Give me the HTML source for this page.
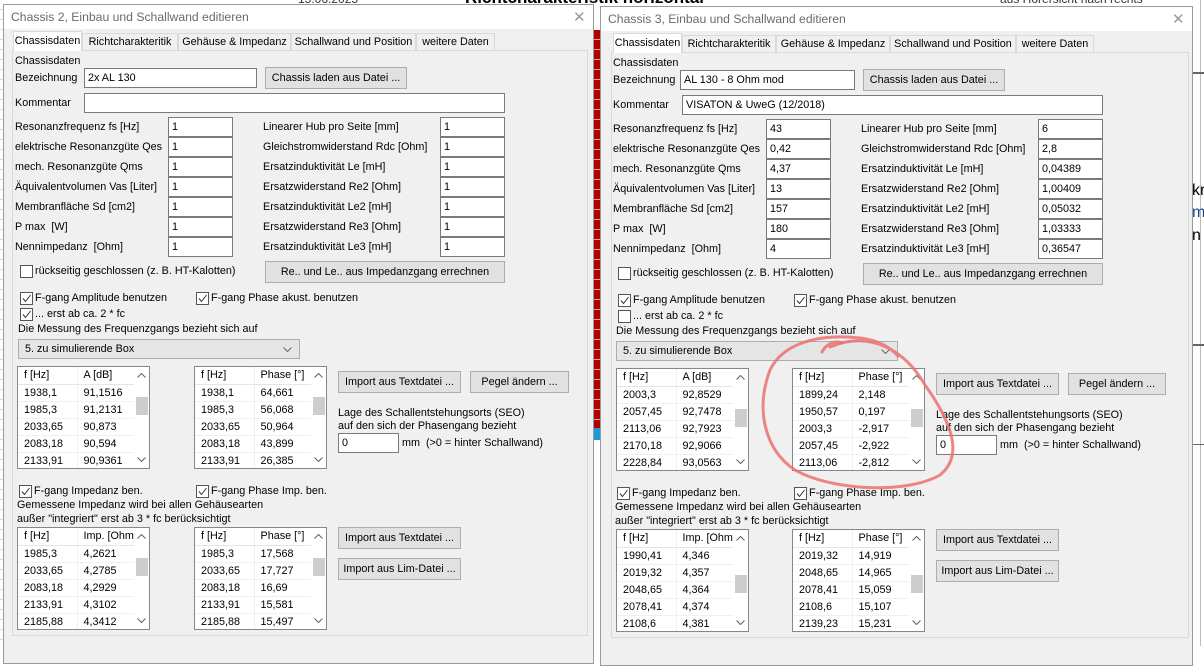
<!DOCTYPE html>
<html><head><meta charset="utf-8"><style>
*{box-sizing:border-box;margin:0;padding:0}
body{width:1204px;height:646px;overflow:hidden;background:#fff;font-family:"Liberation Sans",Arial,sans-serif;font-size:10.8px;color:#000;position:relative}
.a{position:absolute}
.frame{position:absolute;background:#f0f0f0;border:1px solid #9a9a9a;overflow:hidden}
.tbar{position:absolute;left:0;top:0;right:0;height:24px;background:#fff}
.ttl{position:absolute;left:7px;top:5px;font-size:12.2px;color:#6a6a6a}
.cls{position:absolute;top:3px;font-size:15px;color:#999;font-weight:normal}
.grp{position:absolute}
.t{position:absolute;white-space:nowrap;line-height:14px}
.in{position:absolute;background:#fff;border:1px solid #7a7a7a;height:20px;padding-left:3px;line-height:18px;white-space:nowrap}
.btn{position:absolute;background:#e1e1e1;border:1px solid #adadad;height:22px;line-height:20px;text-align:center;white-space:nowrap}
.cb{position:absolute;width:13px;height:13px;background:#fff;border:1px solid #555}
.cb svg{position:absolute;left:0;top:0}
.tab{position:absolute;top:33px;height:17px;border:1px solid #d9d9d9;border-bottom:none;background:#f0f0f0;text-align:center;line-height:16px;white-space:nowrap}
.tab.sel{top:31px;height:20px;background:#fff;line-height:18px;z-index:2}
.panel{position:absolute;left:12px;top:50px;width:576px;height:586px;border:1px solid #d9d9d9;background:#f0f0f0}
.sel2{position:absolute;background:#e5e5e5;border:1px solid #adadad;height:20px;line-height:18px;padding-left:6px}
.tb{position:absolute;width:133px;height:103px;background:#fff;border:1px solid #828790;overflow:hidden}
.tb table{border-collapse:collapse;table-layout:fixed;position:absolute;left:0;top:0}
.tb td{height:17px;border-bottom:1px solid #f0f0f0;border-right:1px solid #f0f0f0;padding-left:6px;white-space:nowrap;overflow:hidden;line-height:16px}
.tb tr:first-child td{border-bottom:1px solid #e5e5e5}
.sb{position:absolute;left:116px;top:0;width:16px;height:101px;background:#fff}
.sb .th{position:absolute;left:2px;top:30px;width:12px;height:18px;background:#cdcdcd}
.sb svg{position:absolute;left:3px}
</style></head><body>

<div class="a" style="left:0;top:0;width:8px;height:646px;background:repeating-linear-gradient(#fff 0 9px,#ddd 9px 10px)"></div>
<div class="t" style="left:298px;top:-8px;font-size:12px;color:#333">15.06.2025</div>
<div class="t" style="left:465px;top:-9px;font-size:17px;font-weight:bold">Richtcharakteristik horizontal</div>
<div class="t" style="left:1000px;top:-8px;font-size:12px;color:#333">aus Hörersicht nach rechts</div>
<div class="a" style="left:593px;top:30px;width:7px;height:398px;background:repeating-linear-gradient(#b00000 0 9px,#e6b0a0 9px 10px)"></div>
<div class="a" style="left:593px;top:428px;width:7px;height:12px;background:#1e9ad6"></div>
<div class="a" style="left:1200px;top:0;width:1px;height:646px;background:#bbb"></div>
<div class="a" style="left:1192px;top:72px;width:12px;height:2px;background:#666"></div>
<div class="a" style="left:1192px;top:344px;width:12px;height:2px;background:#666"></div>
<div class="a" style="left:1192px;top:444px;width:12px;height:1px;background:#666"></div>
<div class="t" style="left:1192px;top:184px;font-size:16px">kr</div>
<div class="t" style="left:1192px;top:206px;font-size:16px;color:#1a4a8a">m</div>
<div class="t" style="left:1192px;top:229px;font-size:16px">n</div>

<!-- LEFT DIALOG -->
<div class="frame" style="left:3px;top:4px;width:591px;height:660px">
 <div class="tbar"></div>
 <div class="ttl">Chassis 2, Einbau und Schallwand editieren</div>
 <div class="cls" style="left:569px">✕</div>
</div>
<div class="grp" style="left:0;top:0">
 <div class="panel"></div>
 <div class="tab sel" style="left:13px;width:69px">Chassisdaten</div>
 <div class="tab" style="left:82px;width:96px">Richtcharakteritik</div>
 <div class="tab" style="left:178px;width:113px">Gehäuse &amp; Impedanz</div>
 <div class="tab" style="left:291px;width:125px">Schallwand und Position</div>
 <div class="tab" style="left:416px;width:79px">weitere Daten</div>
 <div class="t" style="left:15px;top:54px">Chassisdaten</div>
 <div class="t" style="left:15px;top:71px">Bezeichnung</div>
 <div class="in" style="left:84px;top:68px;width:173px">2x AL 130</div>
 <div class="btn" style="left:265px;top:67px;width:142px">Chassis laden aus Datei ...</div>
 <div class="t" style="left:15px;top:96px">Kommentar</div>
 <div class="in" style="left:84px;top:93px;width:421px"></div>

 <div class="t" style="left:15px;top:120px">Resonanzfrequenz fs [Hz]</div>
 <div class="t" style="left:15px;top:140px">elektrische Resonanzgüte Qes</div>
 <div class="t" style="left:15px;top:160px">mech. Resonanzgüte Qms</div>
 <div class="t" style="left:15px;top:180px">Äquivalentvolumen Vas [Liter]</div>
 <div class="t" style="left:15px;top:200px">Membranfläche Sd [cm2]</div>
 <div class="t" style="left:15px;top:220px">P max&nbsp; [W]</div>
 <div class="t" style="left:15px;top:240px">Nennimpedanz&nbsp; [Ohm]</div>
 <div class="in" style="left:168px;top:117px;width:65px">1</div>
 <div class="in" style="left:168px;top:137px;width:65px">1</div>
 <div class="in" style="left:168px;top:157px;width:65px">1</div>
 <div class="in" style="left:168px;top:177px;width:65px">1</div>
 <div class="in" style="left:168px;top:197px;width:65px">1</div>
 <div class="in" style="left:168px;top:217px;width:65px">1</div>
 <div class="in" style="left:168px;top:237px;width:65px">1</div>
 <div class="t" style="left:263px;top:120px">Linearer Hub pro Seite [mm]</div>
 <div class="t" style="left:263px;top:140px">Gleichstromwiderstand Rdc [Ohm]</div>
 <div class="t" style="left:263px;top:160px">Ersatzinduktivität Le [mH]</div>
 <div class="t" style="left:263px;top:180px">Ersatzwiderstand Re2 [Ohm]</div>
 <div class="t" style="left:263px;top:200px">Ersatzinduktivität Le2 [mH]</div>
 <div class="t" style="left:263px;top:220px">Ersatzwiderstand Re3 [Ohm]</div>
 <div class="t" style="left:263px;top:240px">Ersatzinduktivität Le3 [mH]</div>
 <div class="in" style="left:440px;top:117px;width:65px">1</div>
 <div class="in" style="left:440px;top:137px;width:65px">1</div>
 <div class="in" style="left:440px;top:157px;width:65px">1</div>
 <div class="in" style="left:440px;top:177px;width:65px">1</div>
 <div class="in" style="left:440px;top:197px;width:65px">1</div>
 <div class="in" style="left:440px;top:217px;width:65px">1</div>
 <div class="in" style="left:440px;top:237px;width:65px">1</div>

 <div class="cb" style="left:20px;top:265px"></div>
 <div class="t" style="left:35px;top:264px">rückseitig geschlossen (z. B. HT-Kalotten)</div>
 <div class="btn" style="left:265px;top:261px;width:240px">Re.. und Le.. aus Impedanzgang errechnen</div>

 <div class="cb" style="left:20px;top:292px"><svg width="11" height="11"><path d="M2 5.5 L4.5 8.5 L9.5 2" stroke="#333" fill="none" stroke-width="1"/></svg></div>
 <div class="t" style="left:35px;top:291px">F-gang Amplitude benutzen</div>
 <div class="cb" style="left:196px;top:292px"><svg width="11" height="11"><path d="M2 5.5 L4.5 8.5 L9.5 2" stroke="#333" fill="none" stroke-width="1"/></svg></div>
 <div class="t" style="left:211px;top:291px">F-gang Phase akust. benutzen</div>
 <div class="cb" style="left:20px;top:308px"><svg width="11" height="11"><path d="M2 5.5 L4.5 8.5 L9.5 2" stroke="#333" fill="none" stroke-width="1"/></svg></div>
 <div class="t" style="left:35px;top:307px">... erst ab ca. 2 * fc</div>
 <div class="t" style="left:18px;top:322px">Die Messung des Frequenzgangs bezieht sich auf</div>
 <div class="sel2" style="left:18px;top:339px;width:282px">5. zu simulierende Box<svg class="a" style="right:7px;top:7px" width="9" height="5"><path d="M0.5 0.5 L4.5 4.5 L8.5 0.5" stroke="#666" fill="none"/></svg></div>

 <div class="tb" style="left:17px;top:366px"><table><colgroup><col style="width:59px"><col style="width:57px"></colgroup>
 <tr><td>f [Hz]</td><td>A [dB]</td></tr><tr><td>1938,1</td><td>91,1516</td></tr><tr><td>1985,3</td><td>91,2131</td></tr><tr><td>2033,65</td><td>90,873</td></tr><tr><td>2083,18</td><td>90,594</td></tr><tr><td>2133,91</td><td>90,9361</td></tr></table>
 <div class="sb"><svg style="top:6px" width="9" height="5"><path d="M0.5 4.5 L4.5 0.5 L8.5 4.5" stroke="#606060" fill="none"/></svg><div class="th"></div><svg style="top:90px" width="9" height="5"><path d="M0.5 0.5 L4.5 4.5 L8.5 0.5" stroke="#606060" fill="none"/></svg></div></div>
 <div class="tb" style="left:194px;top:366px"><table><colgroup><col style="width:59px"><col style="width:57px"></colgroup>
 <tr><td>f [Hz]</td><td>Phase [°]</td></tr><tr><td>1938,1</td><td>64,661</td></tr><tr><td>1985,3</td><td>56,068</td></tr><tr><td>2033,65</td><td>50,964</td></tr><tr><td>2083,18</td><td>43,899</td></tr><tr><td>2133,91</td><td>26,385</td></tr></table>
 <div class="sb"><svg style="top:6px" width="9" height="5"><path d="M0.5 4.5 L4.5 0.5 L8.5 4.5" stroke="#606060" fill="none"/></svg><div class="th"></div><svg style="top:90px" width="9" height="5"><path d="M0.5 0.5 L4.5 4.5 L8.5 0.5" stroke="#606060" fill="none"/></svg></div></div>

 <div class="btn" style="left:338px;top:371px;width:123px">Import aus Textdatei ...</div>
 <div class="btn" style="left:470px;top:371px;width:99px">Pegel ändern ...</div>
 <div class="t" style="left:338px;top:406px">Lage des Schallentstehungsorts (SEO)</div>
 <div class="t" style="left:338px;top:419px">auf den sich der Phasengang bezieht</div>
 <div class="in" style="left:338px;top:433px;width:61px">0</div>
 <div class="t" style="left:402px;top:436px">mm&nbsp; (&gt;0 = hinter Schallwand)</div>

 <div class="cb" style="left:19px;top:485px"><svg width="11" height="11"><path d="M2 5.5 L4.5 8.5 L9.5 2" stroke="#333" fill="none" stroke-width="1"/></svg></div>
 <div class="t" style="left:34px;top:484px">F-gang Impedanz ben.</div>
 <div class="cb" style="left:196px;top:485px"><svg width="11" height="11"><path d="M2 5.5 L4.5 8.5 L9.5 2" stroke="#333" fill="none" stroke-width="1"/></svg></div>
 <div class="t" style="left:211px;top:484px">F-gang Phase Imp. ben.</div>
 <div class="t" style="left:17px;top:498px">Gemessene Impedanz wird bei allen Gehäusearten</div>
 <div class="t" style="left:17px;top:512px">außer "integriert" erst ab 3 * fc berücksichtigt</div>

 <div class="tb" style="left:17px;top:527px"><table><colgroup><col style="width:59px"><col style="width:57px"></colgroup>
 <tr><td>f [Hz]</td><td>Imp. [Ohm</td></tr><tr><td>1985,3</td><td>4,2621</td></tr><tr><td>2033,65</td><td>4,2785</td></tr><tr><td>2083,18</td><td>4,2929</td></tr><tr><td>2133,91</td><td>4,3102</td></tr><tr><td>2185,88</td><td>4,3412</td></tr></table>
 <div class="sb"><svg style="top:6px" width="9" height="5"><path d="M0.5 4.5 L4.5 0.5 L8.5 4.5" stroke="#606060" fill="none"/></svg><div class="th"></div><svg style="top:90px" width="9" height="5"><path d="M0.5 0.5 L4.5 4.5 L8.5 0.5" stroke="#606060" fill="none"/></svg></div></div>
 <div class="tb" style="left:194px;top:527px"><table><colgroup><col style="width:59px"><col style="width:57px"></colgroup>
 <tr><td>f [Hz]</td><td>Phase [°]</td></tr><tr><td>1985,3</td><td>17,568</td></tr><tr><td>2033,65</td><td>17,727</td></tr><tr><td>2083,18</td><td>16,69</td></tr><tr><td>2133,91</td><td>15,581</td></tr><tr><td>2185,88</td><td>15,497</td></tr></table>
 <div class="sb"><svg style="top:6px" width="9" height="5"><path d="M0.5 4.5 L4.5 0.5 L8.5 4.5" stroke="#606060" fill="none"/></svg><div class="th"></div><svg style="top:90px" width="9" height="5"><path d="M0.5 0.5 L4.5 4.5 L8.5 0.5" stroke="#606060" fill="none"/></svg></div></div>
 <div class="btn" style="left:338px;top:527px;width:123px">Import aus Textdatei ...</div>
 <div class="btn" style="left:338px;top:558px;width:123px">Import aus Lim-Datei ...</div>
</div>

<!-- RIGHT DIALOG -->
<div class="frame" style="left:600px;top:6px;width:593px;height:660px">
 <div class="tbar"></div>
 <div class="ttl">Chassis 3, Einbau und Schallwand editieren</div>
 <div class="cls" style="left:571px">✕</div>
</div>
<div class="grp" style="left:598px;top:2px">
 <div class="panel" style="left:13px;width:578px"></div>
 <div class="tab sel" style="left:15px;width:69px">Chassisdaten</div>
 <div class="tab" style="left:84px;width:94px">Richtcharakteritik</div>
 <div class="tab" style="left:178px;width:114px">Gehäuse &amp; Impedanz</div>
 <div class="tab" style="left:292px;width:126px">Schallwand und Position</div>
 <div class="tab" style="left:418px;width:78px">weitere Daten</div>
 <div class="t" style="left:15px;top:54px">Chassisdaten</div>
 <div class="t" style="left:15px;top:71px">Bezeichnung</div>
 <div class="in" style="left:82px;top:68px;width:175px">AL 130 - 8 Ohm mod</div>
 <div class="btn" style="left:265px;top:67px;width:142px">Chassis laden aus Datei ...</div>
 <div class="t" style="left:15px;top:96px">Kommentar</div>
 <div class="in" style="left:84px;top:93px;width:421px">VISATON &amp; UweG (12/2018)</div>

 <div class="t" style="left:15px;top:120px">Resonanzfrequenz fs [Hz]</div>
 <div class="t" style="left:15px;top:140px">elektrische Resonanzgüte Qes</div>
 <div class="t" style="left:15px;top:160px">mech. Resonanzgüte Qms</div>
 <div class="t" style="left:15px;top:180px">Äquivalentvolumen Vas [Liter]</div>
 <div class="t" style="left:15px;top:200px">Membranfläche Sd [cm2]</div>
 <div class="t" style="left:15px;top:220px">P max&nbsp; [W]</div>
 <div class="t" style="left:15px;top:240px">Nennimpedanz&nbsp; [Ohm]</div>
 <div class="in" style="left:168px;top:117px;width:65px">43</div>
 <div class="in" style="left:168px;top:137px;width:65px">0,42</div>
 <div class="in" style="left:168px;top:157px;width:65px">4,37</div>
 <div class="in" style="left:168px;top:177px;width:65px">13</div>
 <div class="in" style="left:168px;top:197px;width:65px">157</div>
 <div class="in" style="left:168px;top:217px;width:65px">180</div>
 <div class="in" style="left:168px;top:237px;width:65px">4</div>
 <div class="t" style="left:263px;top:120px">Linearer Hub pro Seite [mm]</div>
 <div class="t" style="left:263px;top:140px">Gleichstromwiderstand Rdc [Ohm]</div>
 <div class="t" style="left:263px;top:160px">Ersatzinduktivität Le [mH]</div>
 <div class="t" style="left:263px;top:180px">Ersatzwiderstand Re2 [Ohm]</div>
 <div class="t" style="left:263px;top:200px">Ersatzinduktivität Le2 [mH]</div>
 <div class="t" style="left:263px;top:220px">Ersatzwiderstand Re3 [Ohm]</div>
 <div class="t" style="left:263px;top:240px">Ersatzinduktivität Le3 [mH]</div>
 <div class="in" style="left:440px;top:117px;width:65px">6</div>
 <div class="in" style="left:440px;top:137px;width:65px">2,8</div>
 <div class="in" style="left:440px;top:157px;width:65px">0,04389</div>
 <div class="in" style="left:440px;top:177px;width:65px">1,00409</div>
 <div class="in" style="left:440px;top:197px;width:65px">0,05032</div>
 <div class="in" style="left:440px;top:217px;width:65px">1,03333</div>
 <div class="in" style="left:440px;top:237px;width:65px">0,36547</div>

 <div class="cb" style="left:20px;top:265px"></div>
 <div class="t" style="left:35px;top:264px">rückseitig geschlossen (z. B. HT-Kalotten)</div>
 <div class="btn" style="left:265px;top:261px;width:240px">Re.. und Le.. aus Impedanzgang errechnen</div>

 <div class="cb" style="left:20px;top:292px"><svg width="11" height="11"><path d="M2 5.5 L4.5 8.5 L9.5 2" stroke="#333" fill="none" stroke-width="1"/></svg></div>
 <div class="t" style="left:35px;top:291px">F-gang Amplitude benutzen</div>
 <div class="cb" style="left:196px;top:292px"><svg width="11" height="11"><path d="M2 5.5 L4.5 8.5 L9.5 2" stroke="#333" fill="none" stroke-width="1"/></svg></div>
 <div class="t" style="left:211px;top:291px">F-gang Phase akust. benutzen</div>
 <div class="cb" style="left:20px;top:308px"></div>
 <div class="t" style="left:35px;top:307px">... erst ab ca. 2 * fc</div>
 <div class="t" style="left:18px;top:322px">Die Messung des Frequenzgangs bezieht sich auf</div>
 <div class="sel2" style="left:18px;top:339px;width:282px">5. zu simulierende Box<svg class="a" style="right:7px;top:7px" width="9" height="5"><path d="M0.5 0.5 L4.5 4.5 L8.5 0.5" stroke="#666" fill="none"/></svg></div>

 <div class="tb" style="left:18px;top:366px"><table><colgroup><col style="width:59px"><col style="width:57px"></colgroup>
 <tr><td>f [Hz]</td><td>A [dB]</td></tr><tr><td>2003,3</td><td>92,8529</td></tr><tr><td>2057,45</td><td>92,7478</td></tr><tr><td>2113,06</td><td>92,7923</td></tr><tr><td>2170,18</td><td>92,9066</td></tr><tr><td>2228,84</td><td>93,0563</td></tr></table>
 <div class="sb"><svg style="top:6px" width="9" height="5"><path d="M0.5 4.5 L4.5 0.5 L8.5 4.5" stroke="#606060" fill="none"/></svg><div class="th" style="top:40px"></div><svg style="top:90px" width="9" height="5"><path d="M0.5 0.5 L4.5 4.5 L8.5 0.5" stroke="#606060" fill="none"/></svg></div></div>
 <div class="tb" style="left:194px;top:366px"><table><colgroup><col style="width:59px"><col style="width:57px"></colgroup>
 <tr><td>f [Hz]</td><td>Phase [°]</td></tr><tr><td>1899,24</td><td>2,148</td></tr><tr><td>1950,57</td><td>0,197</td></tr><tr><td>2003,3</td><td>-2,917</td></tr><tr><td>2057,45</td><td>-2,922</td></tr><tr><td>2113,06</td><td>-2,812</td></tr></table>
 <div class="sb"><svg style="top:6px" width="9" height="5"><path d="M0.5 4.5 L4.5 0.5 L8.5 4.5" stroke="#606060" fill="none"/></svg><div class="th" style="top:40px"></div><svg style="top:90px" width="9" height="5"><path d="M0.5 0.5 L4.5 4.5 L8.5 0.5" stroke="#606060" fill="none"/></svg></div></div>

 <div class="btn" style="left:338px;top:371px;width:123px">Import aus Textdatei ...</div>
 <div class="btn" style="left:470px;top:371px;width:98px">Pegel ändern ...</div>
 <div class="t" style="left:338px;top:406px">Lage des Schallentstehungsorts (SEO)</div>
 <div class="t" style="left:338px;top:419px">auf den sich der Phasengang bezieht</div>
 <div class="in" style="left:338px;top:433px;width:61px">0</div>
 <div class="t" style="left:402px;top:436px">mm&nbsp; (&gt;0 = hinter Schallwand)</div>

 <div class="cb" style="left:19px;top:485px"><svg width="11" height="11"><path d="M2 5.5 L4.5 8.5 L9.5 2" stroke="#333" fill="none" stroke-width="1"/></svg></div>
 <div class="t" style="left:34px;top:484px">F-gang Impedanz ben.</div>
 <div class="cb" style="left:196px;top:485px"><svg width="11" height="11"><path d="M2 5.5 L4.5 8.5 L9.5 2" stroke="#333" fill="none" stroke-width="1"/></svg></div>
 <div class="t" style="left:211px;top:484px">F-gang Phase Imp. ben.</div>
 <div class="t" style="left:17px;top:498px">Gemessene Impedanz wird bei allen Gehäusearten</div>
 <div class="t" style="left:17px;top:512px">außer "integriert" erst ab 3 * fc berücksichtigt</div>

 <div class="tb" style="left:18px;top:527px"><table><colgroup><col style="width:59px"><col style="width:57px"></colgroup>
 <tr><td>f [Hz]</td><td>Imp. [Ohm</td></tr><tr><td>1990,41</td><td>4,346</td></tr><tr><td>2019,32</td><td>4,357</td></tr><tr><td>2048,65</td><td>4,364</td></tr><tr><td>2078,41</td><td>4,374</td></tr><tr><td>2108,6</td><td>4,381</td></tr></table>
 <div class="sb"><svg style="top:6px" width="9" height="5"><path d="M0.5 4.5 L4.5 0.5 L8.5 4.5" stroke="#606060" fill="none"/></svg><div class="th" style="top:45px"></div><svg style="top:90px" width="9" height="5"><path d="M0.5 0.5 L4.5 4.5 L8.5 0.5" stroke="#606060" fill="none"/></svg></div></div>
 <div class="tb" style="left:194px;top:527px"><table><colgroup><col style="width:59px"><col style="width:57px"></colgroup>
 <tr><td>f [Hz]</td><td>Phase [°]</td></tr><tr><td>2019,32</td><td>14,919</td></tr><tr><td>2048,65</td><td>14,965</td></tr><tr><td>2078,41</td><td>15,059</td></tr><tr><td>2108,6</td><td>15,107</td></tr><tr><td>2139,23</td><td>15,231</td></tr></table>
 <div class="sb"><svg style="top:6px" width="9" height="5"><path d="M0.5 4.5 L4.5 0.5 L8.5 4.5" stroke="#606060" fill="none"/></svg><div class="th" style="top:45px"></div><svg style="top:90px" width="9" height="5"><path d="M0.5 0.5 L4.5 4.5 L8.5 0.5" stroke="#606060" fill="none"/></svg></div></div>
 <div class="btn" style="left:338px;top:527px;width:123px">Import aus Textdatei ...</div>
 <div class="btn" style="left:338px;top:558px;width:123px">Import aus Lim-Datei ...</div>
</div>

<svg class="a" style="left:0;top:0" width="1204" height="646">
 <path d="M830 347 C 870 330, 905 350, 925 385 C 950 420, 965 455, 940 475 C 905 495, 830 490, 795 470 C 765 450, 755 410, 770 370 C 782 345, 815 333, 860 338 C 880 340, 893 350, 898 356" fill="none" stroke="#ec7070" stroke-width="3" stroke-linecap="round" opacity="0.85"/>
 <path d="M822 352 C 826 344, 835 340, 842 343" fill="none" stroke="#ec7070" stroke-width="3" stroke-linecap="round" opacity="0.85"/>
</svg>
</body></html>
